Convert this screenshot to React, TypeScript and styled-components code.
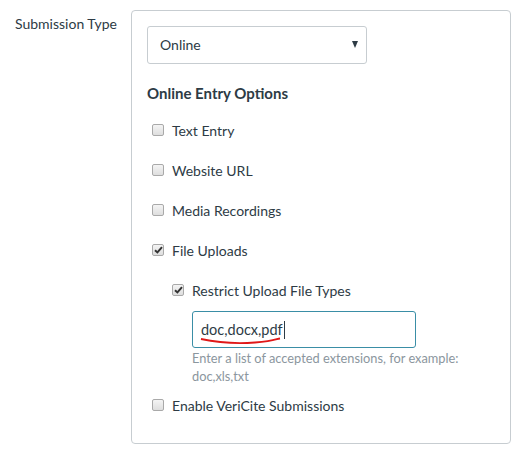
import styled, { createGlobalStyle } from 'styled-components'

const GlobalStyle = createGlobalStyle`
  html, body {
    margin: 0;
    padding: 0;
    background: #fff;
  }
  body {
    font-family: Lato, "Liberation Sans", sans-serif;
    color: #2d3b45;
    font-size: 14px;
  }
`

const FormRow = styled.div`
  display: flex;
  align-items: flex-start;
`

const RowLabel = styled.label`
  width: 116px;
  padding: 15px 0 0 15px;
  font-size: 14px;
  line-height: 18px;
  color: #2d3b45;
`

const Panel = styled.fieldset`
  margin: 10px 0 0 0;
  width: 380px;
  box-sizing: border-box;
  border: 1px solid #c7cdd1;
  border-radius: 4px;
  padding: 15px 15px 18px 15px;
  display: flex;
  flex-direction: column;
  min-inline-size: 0;
`

const SelectBox = styled.div`
  width: 220px;
  height: 38px;
  box-sizing: border-box;
  border: 1px solid #c7cdd1;
  border-radius: 3px;
  display: flex;
  align-items: center;
  justify-content: space-between;
  padding: 0 8px 2px 12px;
  font-size: 14px;
  color: #2d3b45;
`

const Caret = styled.span`
  width: 0;
  height: 0;
  border-left: 3.5px solid transparent;
  border-right: 3.5px solid transparent;
  border-top: 7px solid #2d3b45;
`

const Heading = styled.h4`
  margin: 19px 0 7px;
  font-size: 15px;
  line-height: 20px;
  font-weight: 700;
  color: #2d3b45;
`

const OptionRow = styled.label<{ $indent?: boolean }>`
  height: 40px;
  display: flex;
  align-items: center;
  gap: 8px;
  padding-left: ${(p) => (p.$indent ? '25px' : '5px')};
  font-size: 14px;
  color: #2d3b45;
`

const Box = styled.span`
  width: 12px;
  height: 12px;
  box-sizing: border-box;
  border: 1px solid #a9a9a9;
  border-radius: 2px;
  background: linear-gradient(#f4f4f4, #dedede);
  display: inline-flex;
  align-items: center;
  justify-content: center;
`

const Nested = styled.div`
  padding-left: 45px;
  display: flex;
  flex-direction: column;
`

const InputWrap = styled.div`
  position: relative;
  width: 224px;
  height: 37px;
  margin-top: 1px;
`

const TextInput = styled.div`
  width: 100%;
  height: 100%;
  box-sizing: border-box;
  border: 1px solid #3a8ea6;
  border-radius: 3px;
  display: flex;
  align-items: center;
  padding-left: 8px;
  font-size: 14.5px;
  color: #2d3b45;
`

const Cursor = styled.span`
  display: inline-block;
  width: 1px;
  height: 18px;
  background: #2d3b45;
  margin-left: 1px;
`

const Squiggle = styled.svg`
  position: absolute;
  left: 8px;
  top: 26px;
  pointer-events: none;
`

const HelpText = styled.p`
  margin: 0;
  padding-top: 1px;
  font-size: 12.8px;
  line-height: 18px;
  color: #8b969e;
`

function Checkbox({ checked }: { checked?: boolean }) {
  return (
    <Box>
      {checked && (
        <svg width="9" height="8" viewBox="0 0 9 8">
          <path d="M1 4.2 L3.4 6.4 L8 1.2" stroke="#333" strokeWidth="2" fill="none" />
        </svg>
      )}
    </Box>
  )
}

export default function App() {
  return (
    <>
      <GlobalStyle />
      <FormRow>
        <RowLabel>Submission Type</RowLabel>
        <Panel>
          <SelectBox>
            Online
            <Caret />
          </SelectBox>
          <Heading>Online Entry Options</Heading>
          <OptionRow>
            <Checkbox />
            Text Entry
          </OptionRow>
          <OptionRow>
            <Checkbox />
            Website URL
          </OptionRow>
          <OptionRow>
            <Checkbox />
            Media Recordings
          </OptionRow>
          <OptionRow>
            <Checkbox checked />
            File Uploads
          </OptionRow>
          <OptionRow $indent>
            <Checkbox checked />
            Restrict Upload File Types
          </OptionRow>
          <Nested>
            <InputWrap>
              <TextInput>
                doc,docx,pdf
                <Cursor />
              </TextInput>
              <Squiggle width="90" height="9" viewBox="0 0 90 9">
                <path
                  d="M1 2 C 15 5, 35 7, 55 5.5 S 76 2, 80 1.5"
                  stroke="#e01818"
                  strokeWidth="1.8"
                  fill="none"
                />
              </Squiggle>
            </InputWrap>
            <HelpText>
              Enter a list of accepted extensions, for example:
              <br />
              doc,xls,txt
            </HelpText>
          </Nested>
          <OptionRow>
            <Checkbox />
            Enable VeriCite Submissions
          </OptionRow>
        </Panel>
      </FormRow>
    </>
  )
}
